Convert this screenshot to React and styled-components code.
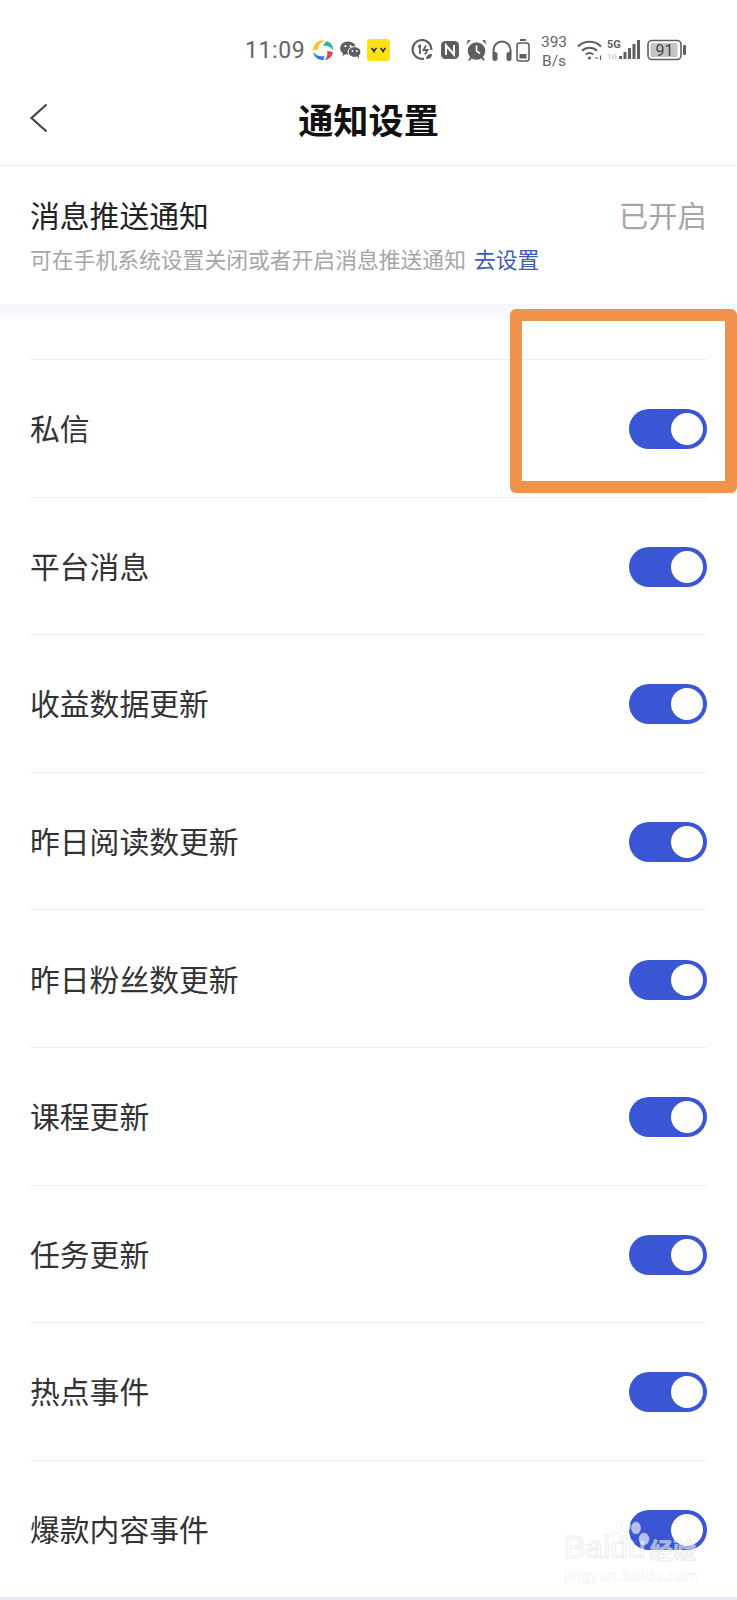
import styled, { createGlobalStyle } from "styled-components";

const GlobalStyle = createGlobalStyle`
  html, body {
    margin: 0;
    padding: 0;
    background: #fff;
  }
  * {
    box-sizing: border-box;
  }
`;

const Page = styled.div`
  position: relative;
  width: 737px;
  height: 1600px;
  overflow: hidden;
  background: #fff;
  font-family: "Noto Sans CJK SC", "Noto Sans", sans-serif;
`;

const StatusBar = styled.div`
  display: flex;
  align-items: center;
  height: 60px;
  margin-top: 20px;
  padding-left: 245px;
  color: #666;
`;

const Time = styled.span`
  font-family: Roboto, sans-serif;
  font-size: 23px;
  letter-spacing: 0.6px;
  width: 67px;
`;

const StatusIcon = styled.svg`
  flex: none;
  margin-left: ${(props) => props.$ml || 0}px;
`;

const Speed = styled.div`
  flex: none;
  width: 28px;
  margin-left: 10px;
  padding-top: 3px;
  font-family: Roboto, sans-serif;
  font-size: 15.5px;
  line-height: 19px;
  text-align: center;
  color: #666;
`;

const Header = styled.header`
  position: relative;
  display: flex;
  align-items: center;
  justify-content: center;
  height: 86px;
  padding-bottom: 7px;
  border-bottom: 1.5px solid #eeeeee;
`;

const BackIcon = styled.svg`
  position: absolute;
  left: 29px;
  top: 23px;
`;

const Title = styled.h1`
  margin: 0;
  font-size: 35.2px;
  line-height: 48px;
  font-weight: 700;
  color: #111;
`;

const PushInfo = styled.section`
  height: 138px;
  padding: 27px 30px 0;
`;

const PushTop = styled.div`
  display: flex;
  align-items: center;
  justify-content: space-between;
  height: 42px;
`;

const PushTitle = styled.span`
  font-size: 29.8px;
  color: #222;
`;

const PushState = styled.span`
  font-size: 29.4px;
  color: #a6a6a6;
`;

const PushHint = styled.p`
  margin: 9px 0 0;
  font-size: 21.8px;
  line-height: 30px;
  color: #a6a6a6;
  white-space: nowrap;
`;

const HintLink = styled.span`
  margin-left: 8px;
  color: #3f5bb8;
`;

const Band = styled.div`
  height: 14px;
  background: linear-gradient(#f5f7fa, #f9fafc);
`;

const Spacer = styled.div`
  height: 41px;
`;

const Row = styled.div`
  display: flex;
  align-items: center;
  justify-content: space-between;
  height: 137.6px;
  margin: 0 30px;
  border-top: 1.5px solid #eeeef0;
`;

const RowLabel = styled.span`
  margin-top: -2px;
  font-size: 29.8px;
  color: #333;
`;

const Toggle = styled.div`
  display: flex;
  align-items: center;
  justify-content: flex-end;
  width: 78px;
  height: 40px;
  margin-top: 2px;
  padding-right: 4px;
  border-radius: 20px;
  background: #3a56d4;
`;

const Knob = styled.div`
  width: 32px;
  height: 32px;
  border-radius: 50%;
  background: #fff;
`;

const BottomStrip = styled.div`
  position: absolute;
  left: 0;
  right: 0;
  bottom: 0;
  height: 3px;
  background: #eaeaf8;
`;

const Annotation = styled.div`
  position: absolute;
  left: 510px;
  top: 309px;
  width: 227px;
  height: 184px;
  border: 12px solid #f0914c;
  border-radius: 6px;
`;

const Watermark = styled.div`
  position: absolute;
  left: 564px;
  top: 1520px;
  width: 140px;
  color: rgba(255, 255, 255, 0.55);
  -webkit-text-stroke: 1px rgba(215, 215, 220, 0.5);
  font-family: "Liberation Sans", sans-serif;
`;

const MarkTop = styled.div`
  display: flex;
  align-items: flex-end;
  height: 46px;
  font-size: 32px;
  line-height: 38px;
`;

const MarkBaidu = styled.span`
  width: 86px;
  white-space: nowrap;
`;

const MarkCn = styled.span`
  font-family: "Noto Sans CJK SC", sans-serif;
  font-size: 23px;
  line-height: 34px;
  font-weight: 700;
`;

const MarkUrl = styled.div`
  margin-top: 1px;
  font-size: 15.5px;
  line-height: 18px;
  letter-spacing: 0.6px;
  color: rgba(255, 255, 255, 0.8);
  -webkit-text-stroke: 0.5px rgba(220, 220, 225, 0.45);
  white-space: nowrap;
`;

const Paw = styled.svg`
  position: absolute;
  left: 48px;
  top: 0;
`;

const rows = [
  "私信",
  "平台消息",
  "收益数据更新",
  "昨日阅读数更新",
  "昨日粉丝数更新",
  "课程更新",
  "任务更新",
  "热点事件",
  "爆款内容事件",
];

const grey = "#5f5f5f";

const AppSwirl = () => (
  <StatusIcon width="22" height="22" viewBox="0 0 22 22">
    <path d="M1.200 11.500C.8 5.500 5.500.8 11.500 1.200c.9.1 1.500.3 2 .5C9 2.800 6 6.500 5.800 10.500z" fill="#f5c52c" />
    <path d="M14.800 2c4.200 1.500 6.800 5.300 6.300 9.600-1.500-3-4-4.600-7.500-4.900-.9-.1-1.800 0-2.500.1 1-2.100 2.300-3.800 3.700-4.800z" fill="#26b7a8" />
    <path d="M21 13.500c-.9 4-4 7.100-8.200 7.500 1.300-1.600 2.200-3.400 2.500-5.600.1-1.200 0-2.300-.3-3.300 2.400.1 4.400.6 6 1.400z" fill="#e8405f" />
    <path d="M11.500 21c-5.400.4-9.700-3.200-10.200-8 1.800 2.900 5.800 4.600 9 4.300.8-.1 1.400-.2 2-.4-.1 1.600-.3 3-.8 4.100z" fill="#2f7fe0" />
  </StatusIcon>
);

const WeChat = () => (
  <StatusIcon $ml={6} width="21" height="18" viewBox="0 0 21 18" fill={grey}>
    <ellipse cx="8" cy="7" rx="8" ry="6.6" />
    <path d="M3 11l-.5 4 4-2.500z" />
    <ellipse cx="14.500" cy="11" rx="6.500" ry="5.400" stroke="#fff" strokeWidth="1" />
    <path d="M17 15l2 3-.2-4z" />
    <circle cx="5.400" cy="5.200" r="1.100" fill="#fff" />
    <circle cx="10.600" cy="5.200" r="1.100" fill="#fff" />
    <circle cx="12.400" cy="10" r=".9" fill="#fff" />
    <circle cx="16.800" cy="10" r=".9" fill="#fff" />
  </StatusIcon>
);

const YyLogo = () => (
  <StatusIcon $ml={6} width="23" height="22" viewBox="0 0 23 22">
    <rect width="23" height="22" rx="3.500" fill="#fde01a" />
    <path d="M4.500 9l2.500 3 2.500-3M13.500 9l2.500 3 2.500-3M7 12v1.500M16 12v1.500" stroke="#222" strokeWidth="1.500" fill="none" />
  </StatusIcon>
);

const DataSaver = () => (
  <StatusIcon $ml={21} width="22" height="22" viewBox="0 0 22 22" fill="none" stroke={grey} strokeWidth="2.200">
    <path d="M13 19.600A9.400 9.400 0 1 1 20.400 11" />
    <path d="M7 8l2-1.500V15M15 6.500L12.500 11h4L14 15.500" strokeWidth="1.800" />
    <path d="M15 20c0-3 2-5 6-5 0 3-2 5-6 5z" fill={grey} stroke="none" />
  </StatusIcon>
);

const NfcIcon = () => (
  <StatusIcon $ml={8} width="18" height="18" viewBox="0 0 18 18">
    <rect width="18" height="18" rx="4.500" fill={grey} />
    <path d="M5 14V4.500L13 13.500V4" stroke="#fff" strokeWidth="2" fill="none" />
  </StatusIcon>
);

const Alarm = () => (
  <StatusIcon $ml={7} width="21" height="22" viewBox="0 0 21 22" fill={grey}>
    <circle cx="10.500" cy="12" r="8.800" />
    <path d="M.5 5.500L5 1.200 1.800 1zM20.500 5.500L16 1.200 19.200 1zM4 18l-2 3.500h2l2-2.500zM17 18l2 3.500h-2l-2-2.500z" />
    <path d="M10.500 6.500V12l3.500 2.500" stroke="#fff" strokeWidth="1.600" fill="none" />
  </StatusIcon>
);

const Headphones = () => (
  <StatusIcon $ml={5} width="20" height="21" viewBox="0 0 20 21" fill="none">
    <path d="M1.500 14V10a8.500 8.500 0 0 1 17 0v4" stroke={grey} strokeWidth="2" />
    <rect x="0.500" y="12" width="5" height="9" rx="2.500" fill={grey} />
    <rect x="14.500" y="12" width="5" height="9" rx="2.500" fill={grey} />
  </StatusIcon>
);

const EarBattery = () => (
  <StatusIcon $ml={4} width="14" height="23" viewBox="0 0 14 23" fill="none">
    <path d="M4 1h6" stroke={grey} strokeWidth="2" />
    <rect x="1" y="4" width="12" height="18" rx="2.500" stroke={grey} strokeWidth="1.600" />
    <rect x="3.500" y="15" width="7" height="4.500" fill={grey} />
  </StatusIcon>
);

const Wifi = () => (
  <StatusIcon $ml={9} width="27" height="21" viewBox="0 0 27 21" fill="none" stroke={grey} strokeWidth="2">
    <path d="M1 6.500a16.500 16.500 0 0 1 23 0" />
    <path d="M5 10.800a11 11 0 0 1 15 0" />
    <path d="M8.700 14.600a6 6 0 0 1 7.600 0" />
    <circle cx="12.500" cy="18" r="1.600" fill={grey} stroke="none" />
    <path d="M18 18h3M23.500 15.500V20" strokeWidth="1.200" />
  </StatusIcon>
);

const Signal = () => (
  <StatusIcon $ml={3} width="34" height="22" viewBox="0 0 34 22" fill={grey}>
    <text x="0" y="9" fontFamily="Roboto, sans-serif" fontSize="11" fontWeight="700">5G</text>
    <text x="0" y="20" fontFamily="Roboto, sans-serif" fontSize="8" fontWeight="700" fill="#cfcfcf">1G</text>
    <rect x="12" y="17" width="3" height="3" />
    <rect x="16.500" y="13" width="3" height="7" />
    <rect x="21" y="9" width="3" height="11" />
    <rect x="25.500" y="5" width="3" height="15" />
    <rect x="30" y="1" width="3" height="19" />
  </StatusIcon>
);

const Battery = () => (
  <StatusIcon $ml={6} width="40" height="22" viewBox="0 0 40 22" fill="none">
    <rect x="1" y="1.500" width="33" height="19" rx="4" stroke={grey} strokeWidth="1.600" />
    <rect x="3.500" y="4" width="27" height="14" rx="1.500" fill="#c4c4c4" />
    <rect x="36" y="6" width="3" height="10" rx="1" fill={grey} />
    <text x="17.500" y="17" textAnchor="middle" fontFamily="Roboto, sans-serif" fontSize="16" fill="#444">91</text>
  </StatusIcon>
);

const App = () => {
  return (
    <Page>
      <GlobalStyle />
      <StatusBar>
        <Time>11:09</Time>
        <AppSwirl />
        <WeChat />
        <YyLogo />
        <DataSaver />
        <NfcIcon />
        <Alarm />
        <Headphones />
        <EarBattery />
        <Speed>393<br />B/s</Speed>
        <Wifi />
        <Signal />
        <Battery />
      </StatusBar>

      <Header>
        <BackIcon width="20" height="30" viewBox="0 0 20 30" fill="none" stroke="#444" strokeWidth="2.200">
          <path d="M17.500 1.500L2.500 15l15 13.500" />
        </BackIcon>
        <Title>通知设置</Title>
      </Header>

      <PushInfo>
        <PushTop>
          <PushTitle>消息推送通知</PushTitle>
          <PushState>已开启</PushState>
        </PushTop>
        <PushHint>
          可在手机系统设置关闭或者开启消息推送通知
          <HintLink>去设置</HintLink>
        </PushHint>
      </PushInfo>

      <Band />
      <Spacer />

      {rows.map((label) => (
        <Row key={label}>
          <RowLabel>{label}</RowLabel>
          <Toggle>
            <Knob />
          </Toggle>
        </Row>
      ))}

      <BottomStrip />
      <Annotation />

      <Watermark>
        <Paw width="50" height="46" viewBox="0 0 50 46" fill="rgba(255,255,255,.62)" stroke="rgba(215,215,220,.45)">
          <ellipse cx="4" cy="18" rx="4.500" ry="6" />
          <ellipse cx="14" cy="6" rx="4.500" ry="6" />
          <ellipse cx="24" cy="8" rx="4.500" ry="6" />
          <ellipse cx="32" cy="19" rx="5" ry="6" />
        </Paw>
        <MarkTop>
          <MarkBaidu>Baidu</MarkBaidu>
          <MarkCn>经验</MarkCn>
        </MarkTop>
        <MarkUrl>jingyan.baidu.com</MarkUrl>
      </Watermark>
    </Page>
  );
};

export default App;
